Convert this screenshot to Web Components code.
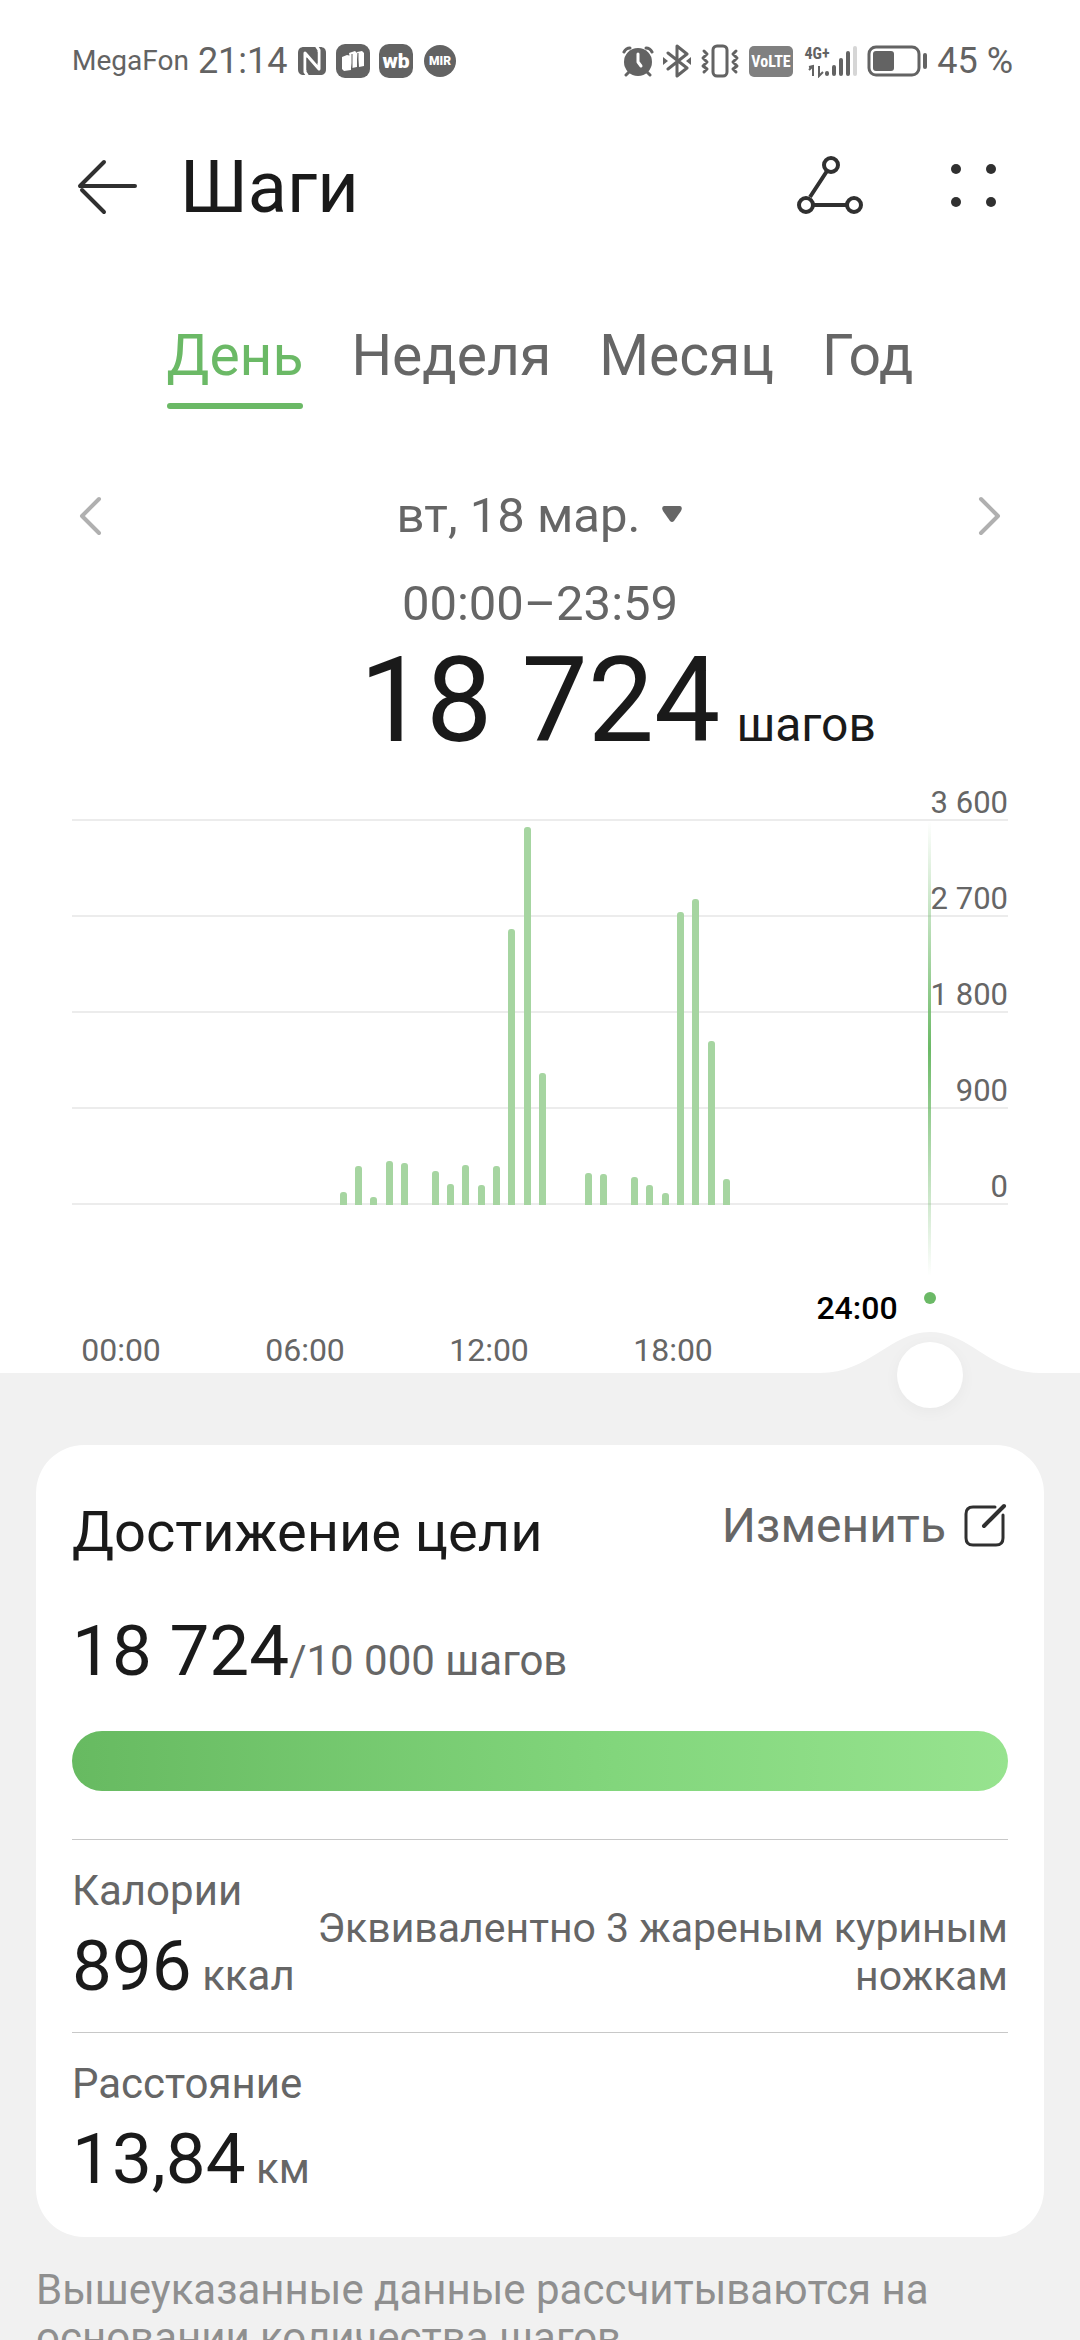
<!DOCTYPE html>
<html lang="ru">
<head>
<meta charset="utf-8">
<meta name="viewport" content="width=device-width, initial-scale=1">
<title>Шаги</title>
<style>
  html { scrollbar-width: none; }
  body {
    margin: 0;
    background: #f1f1f1;
    color: #1a1a1a;
    font-family: Roboto, "Noto Sans", sans-serif;
    --ink: #1a1a1a;
    --icon: #303030;
    --muted: #666;
    --green: #6bb966;
    --bar: #a6d5a1;
    --page: #f1f1f1;
  }
</style>
</head>
<body>
<steps-app></steps-app>

<script>
const define = (name, markup, setup) => {
  const template = document.createElement('template');
  template.innerHTML = markup;
  customElements.define(name, class extends HTMLElement {
    constructor() {
      super();
      this.attachShadow({ mode: 'open' }).append(template.content.cloneNode(true));
    }
    connectedCallback() {
      if (setup) setup(this, this.shadowRoot);
    }
  });
};

const BUTTON = `
  button { appearance: none; border: 0; margin: 0; padding: 0; background: none; color: inherit; font: inherit; cursor: pointer; }
  svg { display: block; flex: none; }
`;

define('status-bar', `
  <style>
    :host { display: flex; align-items: center; justify-content: space-between; height: 122px; padding: 0 67px 0 72px; color: #636363; font-size: 36px; line-height: 40px; white-space: nowrap; }
    div { display: flex; align-items: center; gap: 9px; }
    .carrier { font-size: 28px; }
    svg { display: block; flex: none; }
    text { font-family: Roboto, sans-serif; font-weight: 900; fill: #fff; text-anchor: middle; }
    .narrow { font-family: "Roboto Condensed", "Liberation Sans Narrow", Roboto, sans-serif; font-weight: 700; }
    .net { fill: #636363; }
  </style>
  <div>
    <span class="carrier">MegaFon</span>
    <span>21:14</span>
    <svg width="30" height="30" viewBox="0 0 30 30" aria-label="NFC">
      <path fill="#636363" d="M7 1H23C27 1 29 3 29 7V23C29 27 27 29 23 29H7C3 29 1 27 1 23V7C1 3 3 1 7 1Z"/>
      <path fill="none" stroke="#fff" stroke-width="3" stroke-linejoin="round" stroke-linecap="round" d="M10 29L8 26V7L22 23V4L20 1"/>
      <path fill="none" stroke="#636363" stroke-width="1" d="M10 12V24M20 6V17"/>
    </svg>
    <svg width="34" height="34" viewBox="0 0 34 34">
      <rect width="34" height="34" rx="9" fill="#636363"/>
      <path fill="#fff" d="M6 13L11 11L15 12V26L8 27L6 25ZM13 9L19 7L21 9V23L16 24ZM21 8L26 7L28 9V22L23 23Z"/>
      <path fill="none" stroke="#636363" stroke-width="1" d="M16 10V25M22 9V24"/>
    </svg>
    <svg width="34" height="34" viewBox="0 0 34 34">
      <rect width="34" height="34" rx="10" fill="#636363"/>
      <text x="17" y="24" font-size="21">wb</text>
    </svg>
    <svg width="34" height="34" viewBox="0 0 34 34">
      <circle cx="18" cy="17" r="16" fill="#636363"/>
      <text x="18" y="21" font-size="12">MIR</text>
    </svg>
  </div>
  <div>
    <svg width="32" height="32" viewBox="0 0 32 32" aria-label="Будильник">
      <circle cx="16" cy="17" r="14" fill="#636363"/>
      <path fill="none" stroke="#636363" stroke-width="3" stroke-linecap="round" d="M2 7Q4 3 8 3M30 7Q28 3 24 3M7 27L4 30M25 27L28 30"/>
      <path fill="none" stroke="#fff" stroke-width="3" stroke-linecap="round" stroke-linejoin="round" d="M16 9V17L19 21"/>
    </svg>
    <svg width="28" height="34" viewBox="0 0 28 34" aria-label="Bluetooth">
      <path fill="none" stroke="#636363" stroke-width="3" stroke-linejoin="round" stroke-linecap="round" d="M5 9L24 24L14 32V2L24 10L5 25"/>
      <path fill="#636363" d="M0 13L5 17L0 21ZM28 13L23 17L28 21Z"/>
    </svg>
    <svg width="40" height="34" viewBox="0 0 40 34" aria-label="Вибрация">
      <rect x="13" y="2" width="14" height="30" rx="4" fill="none" stroke="#636363" stroke-width="3"/>
      <path fill="none" stroke="#636363" stroke-width="3" stroke-linecap="round" stroke-linejoin="round" d="M4 7L7 10L3 14L7 18L3 22L7 25L4 28M36 7L33 10L37 14L33 18L37 22L33 25L36 28"/>
    </svg>
    <svg width="44" height="31" viewBox="0 0 44 31">
      <rect width="44" height="31" rx="5" fill="#808080"/>
      <text class="narrow" x="22" y="21" font-size="16">VoLTE</text>
    </svg>
    <svg width="56" height="34" viewBox="0 0 56 34" aria-label="Сигнал">
      <text class="narrow net" x="15" y="15" font-size="16">4G+</text>
      <path fill="none" stroke="#636363" stroke-width="2" d="M7 23L11 22V32M17 22V32L21 28M11 22L7 26"/>
      <path fill="none" stroke="#636363" stroke-width="4" stroke-linecap="round" d="M25 29V30M32 23V30M39 16V30M46 9V30"/>
      <path fill="none" stroke="#d6d6d6" stroke-width="4" stroke-linecap="round" d="M53 4V30"/>
    </svg>
    <svg width="61" height="34" viewBox="0 0 61 34" aria-label="Батарея">
      <rect x="2" y="3" width="50" height="28" rx="7" fill="none" stroke="#636363" stroke-width="3"/>
      <rect x="6" y="7" width="21" height="20" rx="3" fill="#636363"/>
      <path stroke="#636363" stroke-width="4" stroke-linecap="round" d="M58 11V23"/>
    </svg>
    <span>45 %</span>
  </div>
`);

define('app-bar', `
  <style>
    ${BUTTON}
    :host { display: flex; align-items: center; height: 132px; padding: 0 80px 0 76px; }
    h1 { flex: 1; margin: 0 0 0 42px; font-size: 72px; line-height: 80px; font-weight: 400; color: var(--ink); }
    .menu { margin-left: 84px; }
    .line { stroke: var(--icon); }
  </style>
  <button aria-label="Назад">
    <svg width="62" height="62" viewBox="0 2 62 62"><path class="line" fill="none" stroke-width="4" stroke-linecap="round" stroke-linejoin="round" d="M28 7L4 31H59M28 57L6 35"/></svg>
  </button>
  <h1><slot></slot></h1>
  <button aria-label="Маршрут">
    <svg width="68" height="66" viewBox="0 1 68 66"><g class="line" fill="none" stroke-width="4"><path d="M31 17L14 43M18 51H50"/><circle cx="35" cy="11" r="7"/><circle cx="10" cy="51" r="7"/><circle cx="58" cy="51" r="7"/></g></svg>
  </button>
  <button class="menu" aria-label="Ещё">
    <svg width="52" height="62" viewBox="0 0 52 62"><g fill="#303030"><circle cx="8" cy="12" r="5"/><circle cx="43" cy="12" r="5"/><circle cx="8" cy="45" r="5"/><circle cx="43" cy="45" r="5"/></g></svg>
  </button>
`);

define('period-tabs', `
  <style>
    ${BUTTON}
    :host { display: flex; justify-content: center; gap: 48px; margin-top: 70px; font-size: 57px; line-height: 64px; color: var(--muted); }
    button { position: relative; padding-bottom: 21px; }
    button[aria-selected="true"] { color: var(--green); }
    button[aria-selected="true"]::after { content: ""; position: absolute; inset: auto 0 0 0; height: 6px; border-radius: 3px; background: var(--green); }
  </style>
  <button role="tab" aria-selected="true">День</button>
  <button role="tab" aria-selected="false">Неделя</button>
  <button role="tab" aria-selected="false">Месяц</button>
  <button role="tab" aria-selected="false">Год</button>
`);

define('day-summary', `
  <style>
    ${BUTTON}
    :host { display: block; margin-top: 77px; padding: 0 72px; color: var(--muted); font-size: 49px; line-height: 60px; text-align: center; }
    .date { display: flex; align-items: center; justify-content: space-between; }
    .pick { display: flex; align-items: center; gap: 21px; }
    .range { margin-top: 28px; }
    .total { display: grid; grid-template-columns: 1fr auto 1fr; align-items: baseline; margin-top: 7px; color: var(--ink); white-space: nowrap; }
    .total strong { grid-column: 2; font-size: 118px; line-height: 120px; font-weight: 400; }
    .total span { text-align: left; padding-left: 16px; font-size: 48px; }
  </style>
  <div class="date">
    <button aria-label="Предыдущий день"><svg width="36" height="44" viewBox="0 0 36 44"><path fill="none" stroke="#b0b0b0" stroke-width="4" stroke-linecap="round" stroke-linejoin="round" d="M27 5L10 22L27 39"/></svg></button>
    <button class="pick">вт, 18 мар. <svg width="22" height="22" viewBox="0 0 22 22"><path fill="#666" d="M3 1H19Q22 2 20 6L13 16Q11 18 9 16L2 6Q0 2 3 1Z"/></svg></button>
    <button aria-label="Следующий день"><svg width="36" height="44" viewBox="0 0 36 44"><path fill="none" stroke="#b0b0b0" stroke-width="4" stroke-linecap="round" stroke-linejoin="round" d="M9 5L26 22L9 39"/></svg></button>
  </div>
  <div class="range">00:00–23:59</div>
  <div class="total"><strong>18 724</strong><span>шагов</span></div>
`);

define('steps-chart', `
  <style>
    :host { display: block; position: relative; margin-top: 20px; }
    .plot { display: grid; margin: 0 72px; }
    .scale, .bars { grid-area: 1 / 1; }
    .scale div { box-sizing: border-box; display: flex; align-items: flex-end; justify-content: flex-end; height: 96px; border-bottom: 2px solid #ececec; color: var(--muted); font-size: 31px; line-height: 32px; }
    .scale div:first-child { height: 40px; }
    .bars { display: flex; align-items: flex-end; margin: 40px 151px 0 49px; }
    .bars span { flex: 1; height: 100%; display: flex; align-items: flex-end; justify-content: center; }
    .bars i { width: 7px; border-radius: 3px 3px 0 0; background: var(--bar); }
    .axis { box-sizing: border-box; display: flex; align-items: flex-end; height: 168px; padding: 0 131px 3px 29px; color: var(--muted); font-size: 32px; line-height: 40px; text-align: center; }
    .axis span { flex: 1; }
    .axis .now { margin-bottom: 42px; color: #000; font-weight: 500; }
    .hump { position: absolute; right: 40px; bottom: 0; }
    .cursor { position: absolute; right: 149px; top: 40px; width: 3px; height: 455px; background: linear-gradient(to bottom, transparent, var(--green) 50%, transparent); }
    .dot { position: absolute; right: 144px; bottom: 69px; width: 12px; height: 12px; border-radius: 50%; background: var(--green); }
    input { appearance: none; position: absolute; left: 88px; bottom: -35px; width: calc(100% - 205px); height: 66px; margin: 0; background: none; }
    input::-webkit-slider-thumb { appearance: none; width: 66px; height: 66px; border-radius: 50%; background: #fff; box-shadow: 0 4px 16px rgba(0, 0, 0, .04); }
  </style>
  <div class="plot">
    <div class="scale"><div>3 600</div><div>2 700</div><div>1 800</div><div>900</div><div>0</div></div>
    <div class="bars"></div>
  </div>
  <div class="axis"><span>00:00</span><span>06:00</span><span>12:00</span><span>18:00</span><span class="now">24:00</span></div>
  <svg class="hump" width="220" height="42" viewBox="0 0 220 42" aria-hidden="true"><path fill="#f1f1f1" d="M0 42C50 42 70 1 110 1S170 42 220 42Z"/></svg>
  <div class="cursor"></div>
  <div class="dot"></div>
  <input type="range" min="0" max="48" value="48" aria-label="Время">
`, (host, root) => {
  // Steps per half-hour interval, keyed by interval index from midnight.
  const steps = {
    14: 122, 15: 366, 16: 75, 17: 413, 18: 394, 20: 319, 21: 197, 22: 375, 23: 188, 24: 366,
    25: 2588, 26: 3544, 27: 1238, 30: 300, 31: 291, 33: 263, 34: 188, 35: 113,
    36: 2747, 37: 2869, 38: 1538, 39: 244
  };
  const bars = root.querySelector('.bars');
  bars.replaceChildren(...Array.from({ length: 48 }, (_, i) => {
    const slot = document.createElement('span');
    if (steps[i]) {
      const bar = document.createElement('i');
      bar.style.height = `${steps[i] / 36}%`;
      slot.append(bar);
    }
    return slot;
  }));
});

define('metric-row', `
  <style>
    :host { display: flex; align-items: flex-end; justify-content: space-between; border-top: 1px solid #c8c8c8; padding: 27px 0 24px; color: var(--muted); font-size: 42px; line-height: 48px; }
    .label { margin-bottom: 9px; }
    .value { white-space: nowrap; }
    .value ::slotted(b) { font-size: 71px; line-height: 84px; font-weight: 400; color: var(--ink); }
    .note { flex: 1; padding-bottom: 8px; font-size: 41px; text-align: right; }
  </style>
  <div><div class="label"><slot name="label"></slot></div><div class="value"><slot name="value"></slot> <slot name="unit"></slot></div></div>
  <div class="note"><slot></slot></div>
`);

define('goal-card', `
  <style>
    ${BUTTON}
    :host { display: block; margin: 72px 36px 0; padding: 57px 36px 12px; border-radius: 48px; background: #fff; }
    header { display: flex; align-items: flex-start; justify-content: space-between; }
    h2 { margin: 0; font-size: 56px; line-height: 60px; font-weight: 400; color: var(--ink); }
    button { display: flex; align-items: center; gap: 16px; font-size: 48px; line-height: 48px; color: var(--muted); }
    .count { margin-top: 47px; font-size: 42px; line-height: 48px; color: var(--muted); }
    .count b { font-size: 71px; line-height: 84px; font-weight: 400; color: var(--ink); }
    progress { appearance: none; display: block; width: 100%; height: 60px; margin: 38px 0 48px; border: 0; border-radius: 30px; overflow: hidden; }
    progress::-webkit-progress-bar { background: #e8e8e8; }
    progress::-webkit-progress-value { background: linear-gradient(to right, #67ba61, #82d67c 58%, #97e38f); }
  </style>
  <header>
    <h2>Достижение цели</h2>
    <button>Изменить
      <svg width="46" height="46" viewBox="0 0 46 46" fill="none" stroke="#303030" stroke-linecap="round"><path stroke-width="3" d="M33 4H11Q4 4 4 11V35Q4 42 11 42H34Q41 42 41 35V12"/><path stroke-width="4" d="M22 23L42 3"/></svg>
    </button>
  </header>
  <div class="count"><b>18 724</b>/10 000 шагов</div>
  <progress max="10000" value="10000" aria-label="Достижение цели"></progress>
  <slot></slot>
`);

define('steps-app', `
  <style>
    :host { display: block; }
    .top { background: #fff; }
    p { margin: 29px 36px 0; font-size: 42px; line-height: 48px; color: #8f8f8f; }
  </style>
  <div class="top">
    <status-bar></status-bar>
    <app-bar>Шаги</app-bar>
    <period-tabs role="tablist"></period-tabs>
    <day-summary></day-summary>
    <steps-chart></steps-chart>
  </div>
  <goal-card>
    <metric-row><span slot="label">Калории</span><b slot="value">896</b><span slot="unit">ккал</span>Эквивалентно 3 жареным куриным ножкам</metric-row>
    <metric-row><span slot="label">Расстояние</span><b slot="value">13,84</b><span slot="unit">км</span></metric-row>
  </goal-card>
  <p>Вышеуказанные данные рассчитываются на основании количества шагов.</p>
`);
</script>
</body>
</html>
